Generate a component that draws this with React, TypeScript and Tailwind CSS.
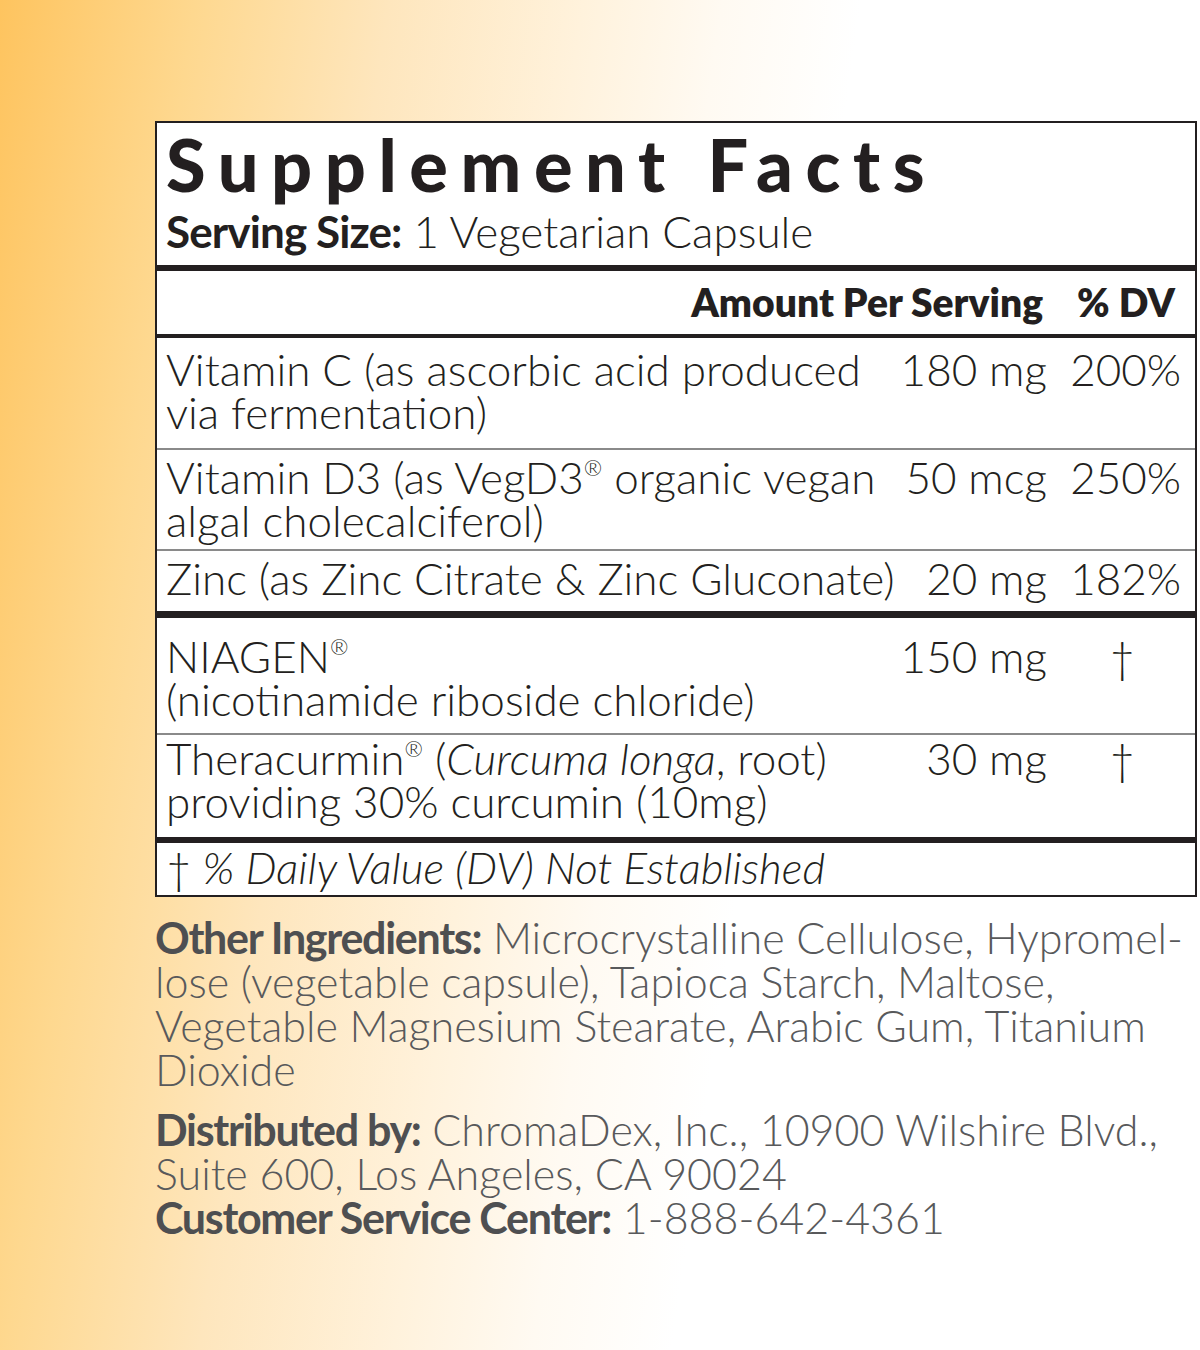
const font = "font-['Lato','Liberation_Sans',sans-serif]";

function Bar({ h }: { h: string }) {
  return <div className={`${h} w-full bg-[#231f20]`} />;
}

function Thin() {
  return <div className="h-[2px] w-full bg-[#8a8a8a]" />;
}

function Row({
  name,
  amount,
  dv,
  pad,
}: {
  name: React.ReactNode;
  amount: string;
  dv: string;
  pad: string;
}) {
  return (
    <div className={`flex items-start pl-[9px] pr-[14px] text-[44px] leading-[43px] font-light ${pad}`}>
      <div className="min-w-0 flex-1 whitespace-nowrap">{name}</div>
      <div className="w-[160px] shrink-0 text-right whitespace-nowrap">{amount}</div>
      <div className={`w-[134px] shrink-0 whitespace-nowrap text-right ${dv === "†" ? "pr-[46px]" : ""}`}>{dv}</div>
    </div>
  );
}

const R = () => <sup className="relative top-[-0.12em] text-[0.5em] align-super">®</sup>;

const label = "font-bold tracking-[-0.03em] text-[#4e4f51]";

export default function App() {
  return (
    <div
      className={`${font} min-h-[1350px] w-[1200px] bg-[linear-gradient(98deg,#fec45f_0%,#fed88f_14%,#fee6bd_28%,#fff2dc_42%,#fffaf2_52%,#ffffff_62%)] pl-[155px] pt-[121px]`}
    >
      <div className="w-[1042px] border-2 border-[#231f20] bg-white text-[#231f20]">
        <div className="px-[9px] pt-[2px]">
          <div className="text-[72px] leading-[78px] font-black tracking-[0.175em] whitespace-nowrap">Supplement Facts</div>
          <div className="pb-[6px] text-[44px] leading-[56px] font-light whitespace-nowrap">
            <span className="font-bold tracking-[-0.02em]">Serving Size:</span> 1 Vegetarian Capsule
          </div>
        </div>
        <Bar h="h-[6px]" />
        <div className="flex h-[63px] items-center justify-end pr-[20px] text-[39px] font-extrabold whitespace-nowrap">
          <span>Amount Per Serving</span>
          <span className="ml-[34px]">% DV</span>
        </div>
        <Bar h="h-[4px]" />
        <Row
          pad="pt-[10px] pb-[14px]"
          name={<>Vitamin C (as ascorbic acid produced<br />via fermentation)</>}
          amount="180 mg"
          dv="200%"
        />
        <Thin />
        <Row
          pad="pt-[6px] pb-[7px]"
          name={<>Vitamin D3 (as VegD3<R /> organic vegan<br />algal cholecalciferol)</>}
          amount="50 mcg"
          dv="250%"
        />
        <Thin />
        <Row pad="pt-[6px] pb-[11px]" name="Zinc (as Zinc Citrate & Zinc Gluconate)" amount="20 mg" dv="182%" />
        <Bar h="h-[7px]" />
        <Row
          pad="pt-[17px] pb-[12px]"
          name={<>NIAGEN<R /><br />(nicotinamide riboside chloride)</>}
          amount="150 mg"
          dv="†"
        />
        <Thin />
        <Row
          pad="pt-[2px] pb-[14px]"
          name={
            <>
              Theracurmin<R /> (<i>Curcuma longa</i>, root)
              <br />
              providing 30% curcumin (10mg)
            </>
          }
          amount="30 mg"
          dv="†"
        />
        <Bar h="h-[6px]" />
        <div className="px-[9px] pt-[3px] pb-[6px] text-[44px] leading-[43px] font-light whitespace-nowrap italic">
          <span className="not-italic">†</span> % Daily Value (DV) Not Established
        </div>
      </div>

      <div className="pt-[19px] text-[43px] leading-[44px] font-light whitespace-nowrap text-[#58595b]">
        <p>
          <span className={label}>Other Ingredients:</span> Microcrystalline Cellulose, Hypromel-
          <br />
          lose (vegetable capsule), Tapioca Starch, Maltose,
          <br />
          Vegetable Magnesium Stearate, Arabic Gum, Titanium
          <br />
          Dioxide
        </p>
        <p className="mt-[16px]">
          <span className={label}>Distributed by:</span> ChromaDex, Inc., 10900 Wilshire Blvd.,
          <br />
          Suite 600, Los Angeles, CA 90024
          <br />
          <span className={label}>Customer Service Center:</span> 1-888-642-4361
        </p>
      </div>
    </div>
  );
}
